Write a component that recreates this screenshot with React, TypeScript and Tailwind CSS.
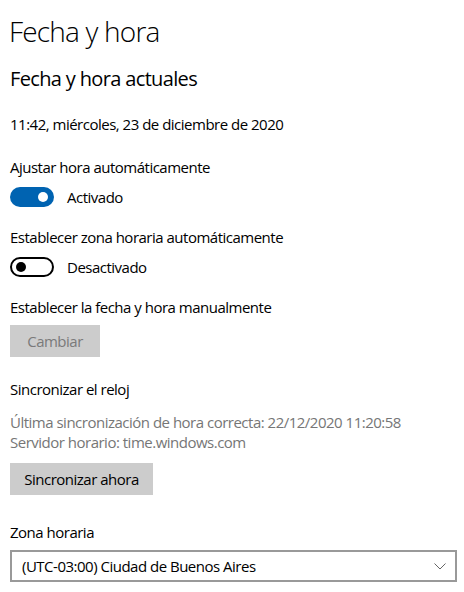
import React from "react";

const font = { fontFamily: '"Open Sans", "Noto Sans", sans-serif' };

function Toggle({ on }: { on: boolean }) {
  if (on) {
    return (
      <div className="w-[44px] h-[20px] rounded-full bg-[#0063b1] flex items-center justify-end pr-[6px]">
        <div className="w-[10px] h-[10px] rounded-full bg-white" />
      </div>
    );
  }
  return (
    <div className="w-[44px] h-[20px] rounded-full border-2 border-black flex items-center pl-[4px]">
      <div className="w-[10px] h-[10px] rounded-full bg-black" />
    </div>
  );
}

export default function App() {
  return (
    <div
      className="w-[464px] h-[592px] bg-white text-black pl-[10px] pt-[11px] overflow-hidden tracking-[-0.5px]"
      style={font}
    >
      <div className="text-[28px] leading-[40px] font-light tracking-[-0.8px] -ml-[1px]">Fecha y hora</div>
      <div className="mt-[14px] text-[20px] leading-[28px] tracking-[-0.65px]">Fecha y hora actuales</div>
      <div className="mt-[21px] text-[15px] leading-[20px]">
        11:42, miércoles, 23 de diciembre de 2020
      </div>

      <div className="mt-[23px] text-[15px] leading-[20px]">Ajustar hora automáticamente</div>
      <div className="mt-[10px] flex items-center gap-[13px] text-[15px] leading-[20px]">
        <Toggle on />
        <span>Activado</span>
      </div>

      <div className="mt-[20px] text-[15px] leading-[20px]">
        Establecer zona horaria automáticamente
      </div>
      <div className="mt-[10px] flex items-center gap-[13px] text-[15px] leading-[20px]">
        <Toggle on={false} />
        <span>Desactivado</span>
      </div>

      <div className="mt-[20px] text-[15px] leading-[20px]">
        Establecer la fecha y hora manualmente
      </div>
      <button className="mt-[8px] w-[90px] h-[32px] bg-[#cccccc] text-[#7a7a7a] text-[15px] tracking-[-0.5px] flex items-center justify-center">
        Cambiar
      </button>

      <div className="mt-[22px] text-[15px] leading-[20px]">Sincronizar el reloj</div>
      <div className="mt-[13px] text-[15px] leading-[20px] text-[#767676]">
        <div>Última sincronización de hora correcta: 22/12/2020 11:20:58</div>
        <div>Servidor horario: time.windows.com</div>
      </div>
      <button className="mt-[11px] w-[143px] h-[32px] bg-[#cccccc] text-black text-[15px] tracking-[-0.5px] flex items-center justify-center">
        Sincronizar ahora
      </button>

      <div className="mt-[27px] text-[15px] leading-[20px]">Zona horaria</div>
      <div className="mt-[8px] w-[447px] h-[32px] border-2 border-[#999999] flex items-center justify-between pl-[10px] pr-[9px] text-[15px]">
        <span>(UTC-03:00) Ciudad de Buenos Aires</span>
        <svg width="12" height="7" viewBox="0 0 12 7" fill="none">
          <polyline points="0.5,0.5 6,6 11.5,0.5" stroke="#666666" strokeWidth="1" />
        </svg>
      </div>
    </div>
  );
}
